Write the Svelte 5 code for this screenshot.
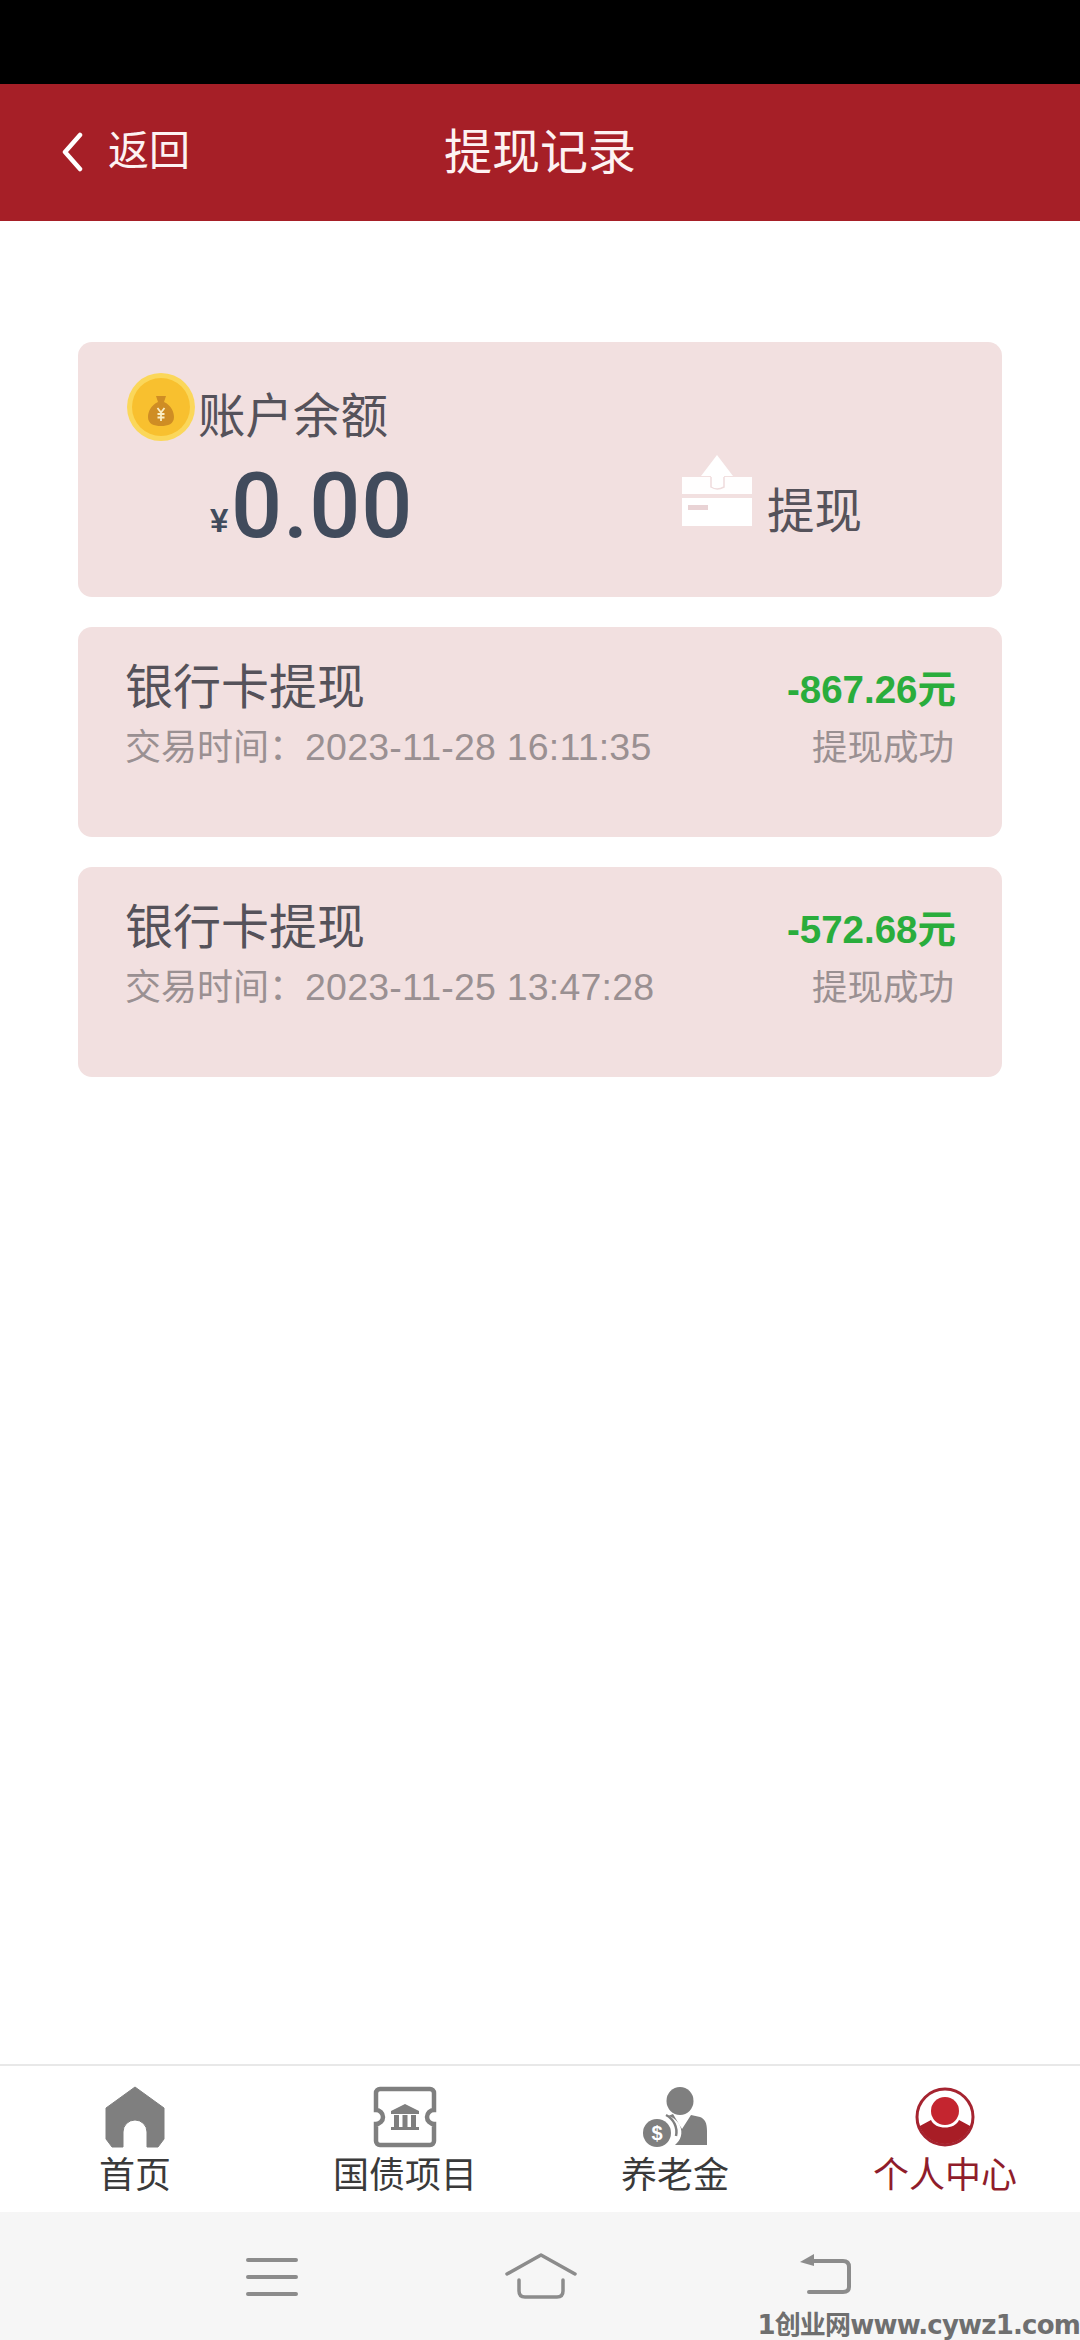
<script>
  const records = [
    { time: '2023-11-28 16:11:35', amount: '-867.26元' },
    { time: '2023-11-25 13:47:28', amount: '-572.68元' }
  ];
</script>

<div class="page">
  <div class="status"></div>
  <header class="header">
    <div class="back">
      <svg class="chev" viewBox="0 0 24 40" width="24" height="40"><path d="M20 3 L5 20 L20 37" fill="none" stroke="#fff" stroke-width="4.5" stroke-linecap="round" stroke-linejoin="round"/></svg>
      <span>返回</span>
    </div>
    <div class="title">提现记录</div>
    <div></div>
  </header>

  <main class="main">
    <section class="card balance">
      <div class="bal-head">
        <svg class="coin" viewBox="0 0 72 72" width="72" height="72">
          <circle cx="36" cy="36" r="34" fill="#fbd75a"/>
          <circle cx="36" cy="36" r="29" fill="#f8c02f"/>
          <path d="M31 25 L41 25 L39 31 C46 34 49 41 49 46 C49 53 43 55 36 55 C29 55 23 53 23 46 C23 41 26 34 33 31 Z" fill="#cf8d24"/>
          <path d="M32.500 37 L36 41.500 L39.500 37 M36 41.500 V50 M32.500 43 H39.500 M32.500 46.500 H39.500" fill="none" stroke="#fbeec4" stroke-width="1.800"/>
        </svg>
        <span class="bal-label">账户余额</span>
      </div>
      <div class="bal-row">
        <div class="bal-amount"><span class="yen">¥</span><span class="num">0.00</span></div>
        <div class="withdraw">
          <svg class="upload" viewBox="0 0 72 75" width="72" height="75">
            <path d="M0 26 H70 V43 H0 Z" fill="#fff" opacity="0.96"/>
            <path d="M35 4 L51 25 H42 V37 Q35 41 29 37 V25 H19 Z" fill="#fff"/>
            <path d="M29 26 V36 Q35 40 42 36 V26" fill="none" stroke="#efdcdd" stroke-width="1.500"/>
            <rect x="0" y="47" width="70" height="28" fill="#fff"/>
            <rect x="6" y="54" width="20" height="5" fill="#e9d3d5"/>
          </svg>
          <span>提现</span>
        </div>
      </div>
    </section>

    {#each records as r}
      <section class="card record">
        <div class="rec-row">
          <span class="rec-title">银行卡提现</span>
          <span class="rec-amount">{r.amount}</span>
        </div>
        <div class="rec-row sub">
          <span>交易时间：<span class="digits">{r.time}</span></span>
          <span class="rec-state">提现成功</span>
        </div>
      </section>
    {/each}
  </main>

  <nav class="tabs">
    <div class="tab">
      <svg viewBox="0 0 66 62" width="66" height="62"><path d="M33 1 L62 22 V53 L56 61 H45 V46 A12 12 0 0 0 21 46 V61 H10 L4 53 V22 Z" fill="#7f7f7f" stroke="#7f7f7f" stroke-width="1" stroke-linejoin="round"/></svg>
      <span>首页</span>
    </div>
    <div class="tab">
      <svg viewBox="0 0 66 62" width="66" height="62">
        <path d="M8 3 H58 A4 4 0 0 1 62 7 V24 A7 7 0 0 0 62 38 V55 A4 4 0 0 1 58 59 H8 A4 4 0 0 1 4 55 V38 A7 7 0 0 0 4 24 V7 A4 4 0 0 1 8 3 Z" fill="none" stroke="#7f7f7f" stroke-width="4.500"/>
        <path d="M33 18 L47 25 V28 H19 V25 Z" fill="#7f7f7f"/>
        <path d="M22 41 V29 H27 V41 Z M30.500 41 V29 H35.500 V41 Z M39 41 V29 H44 V41 Z M19 41 H47 V44 H19 Z" fill="#7f7f7f"/>
      </svg>
      <span>国债项目</span>
    </div>
    <div class="tab">
      <svg viewBox="0 0 66 62" width="66" height="62">
        <ellipse cx="38" cy="15" rx="13.500" ry="14" fill="#7f7f7f"/>
        <path d="M26 30 L31 28 L40 43 L49 29 L58 31 C63 33 65 37 65 45 V59 H33 C39 54 41 47 38 40 C36 35 31 31 26 30 Z" fill="#7f7f7f"/>
        <circle cx="15" cy="47" r="14" fill="#7f7f7f"/>
        <path d="M24 29 A19 19 0 0 1 34 50" fill="none" stroke="#7f7f7f" stroke-width="2.500"/>
        <text x="15" y="54" class="dollar" text-anchor="middle">$</text>
      </svg>
      <span>养老金</span>
    </div>
    <div class="tab active">
      <svg viewBox="0 0 66 62" width="66" height="62">
        <defs>
          <clipPath id="disc"><circle cx="33" cy="31" r="27"/></clipPath>
        </defs>
        <circle cx="33" cy="31" r="28" fill="#fff" stroke="#a52430" stroke-width="3"/>
        <path d="M4 62 V42 L19 34 C23 44 43 44 47 34 L62 42 V62 Z" fill="#a81d26" clip-path="url(#disc)"/>
        <circle cx="33" cy="25" r="14" fill="#c4252f"/>
      </svg>
      <span>个人中心</span>
    </div>
  </nav>

  <div class="sysnav">
    <svg class="sys menu" viewBox="0 0 52 40" width="52" height="40">
      <path d="M2 3 H50 M2 20 H50 M2 37 H50" stroke="#8c8c8c" stroke-width="4" stroke-linecap="round"/>
    </svg>
    <svg class="sys home" viewBox="0 0 72 46" width="72" height="46">
      <path d="M2 21 L36 2 L70 21" fill="none" stroke="#8c8c8c" stroke-width="3.500" stroke-linecap="round" stroke-linejoin="round"/>
      <path d="M14 27 V38 Q14 44 20 44 H52 Q58 44 58 38 V27" fill="none" stroke="#8c8c8c" stroke-width="3.500" stroke-linecap="round"/>
    </svg>
    <svg class="sys" viewBox="0 0 52 44" width="52" height="44">
      <path d="M15 1 L1 9 L15 13 Z" fill="#8c8c8c"/>
      <path d="M12 8 H44 Q50 8 50 14 V34 Q50 39 44 39 H10" fill="none" stroke="#8c8c8c" stroke-width="4" stroke-linecap="round"/>
    </svg>
    <div class="mark">1创业网www.cywz1.com</div>
  </div>
</div>

<style>
  :global(body) {
    margin: 0;
    background: #fff;
  }
  .page {
    position: relative;
    width: 1080px;
    height: 2340px;
    display: flex;
    flex-direction: column;
    overflow: hidden;
    background: #fff;
    font-family: "Liberation Sans", "Noto Sans CJK SC", sans-serif;
  }
  .status {
    height: 84px;
    background: #000;
    flex: none;
  }
  .header {
    height: 137px;
    flex: none;
    background: #a61f27;
    color: #fdf2f2;
    display: grid;
    grid-template-columns: 1fr auto 1fr;
    align-items: center;
    box-sizing: border-box;
  }
  .back {
    display: flex;
    align-items: center;
    padding-left: 60px;
    gap: 24px;
    font-size: 41px;
  }
  .back span {
    line-height: 50px;
    margin-bottom: 3px;
  }
  .chev {
    flex: none;
    margin-bottom: 2px;
  }
  .title {
    font-size: 48px;
    line-height: 60px;
  }
  .main {
    flex: 1;
    padding: 121px 78px 0;
    display: flex;
    flex-direction: column;
    gap: 30px;
  }
  .card {
    background: #f2e0e0;
    border-radius: 14px;
    box-sizing: border-box;
  }
  .balance {
    height: 255px;
    padding: 29px 0 0 47px;
    display: flex;
    flex-direction: column;
  }
  .bal-head {
    display: flex;
    align-items: flex-start;
    height: 84px;
  }
  .coin {
    flex: none;
  }
  .bal-label {
    font-size: 47.500px;
    line-height: 60px;
    margin-top: 16px;
    margin-left: 1px;
    color: #55525a;
  }
  .bal-row {
    display: flex;
    align-items: flex-start;
    margin-top: -3px;
    padding-left: 85px;
  }
  .bal-amount {
    width: 472px;
    color: #414b5c;
    height: 100px;
    margin-top: 5px;
    white-space: nowrap;
  }
  .yen {
    display: inline-block;
    font-size: 33px;
    font-weight: 700;
    width: 21px;
    vertical-align: 5px;
    line-height: 30px;
  }
  .num {
    font-family: Roboto, "Liberation Sans", sans-serif;
    font-size: 90px;
    line-height: 100px;
    font-weight: 500;
    letter-spacing: 1px;
  }
  .withdraw {
    display: flex;
    align-items: flex-end;
    gap: 13px;
    margin-top: -1px;
    font-size: 47.500px;
    color: #55525a;
  }
  .withdraw span {
    line-height: 60px;
    margin-bottom: -16px;
  }
  .upload {
    flex: none;
  }
  .record {
    height: 210px;
    padding: 26px 46px 0 47px;
  }
  .rec-row {
    display: flex;
    justify-content: space-between;
    align-items: center;
    height: 60px;
  }
  .rec-title {
    font-size: 48px;
    color: #55525a;
  }
  .rec-amount {
    font-size: 38.500px;
    font-weight: 700;
    color: #2aad3c;
    padding-top: 6px;
  }
  .sub {
    font-size: 36px;
    color: #9a9092;
    padding-top: 1px;
  }
  .digits {
    font-size: 37.500px;
    letter-spacing: 0.2px;
  }
  .rec-state {
    font-size: 35.500px;
    padding-right: 2px;
  }
  .tabs {
    height: 148px;
    flex: none;
    box-sizing: border-box;
    border-top: 2px solid #e8e8e8;
    padding-top: 20px;
    display: grid;
    grid-template-columns: repeat(4, 1fr);
    background: #fff;
  }
  .tab {
    display: flex;
    flex-direction: column;
    align-items: center;
    font-size: 36px;
    color: #3a3a3a;
  }
  .tab span {
    line-height: 48px;
    margin-top: 4px;
  }
  .tab.active {
    color: #8f1d2b;
  }
  .dollar {
    font: 700 20px "Liberation Sans", sans-serif;
    fill: #fff;
  }
  .sysnav {
    height: 128px;
    flex: none;
    background: #f6f6f6;
    box-sizing: border-box;
    padding: 41px 229px 0 246px;
    display: flex;
    justify-content: space-between;
    align-items: flex-start;
    position: relative;
  }
  .menu {
    margin-top: 4px;
  }
  .home {
    margin-left: -16px;
  }
  .mark {
    position: absolute;
    right: 0;
    bottom: 0;
    font-family: "DejaVu Sans", "Noto Sans CJK SC", sans-serif;
    font-weight: 700;
    font-size: 26px;
    line-height: 30px;
    letter-spacing: -0.8px;
    color: #6f6f6f;
    white-space: nowrap;
  }
</style>
